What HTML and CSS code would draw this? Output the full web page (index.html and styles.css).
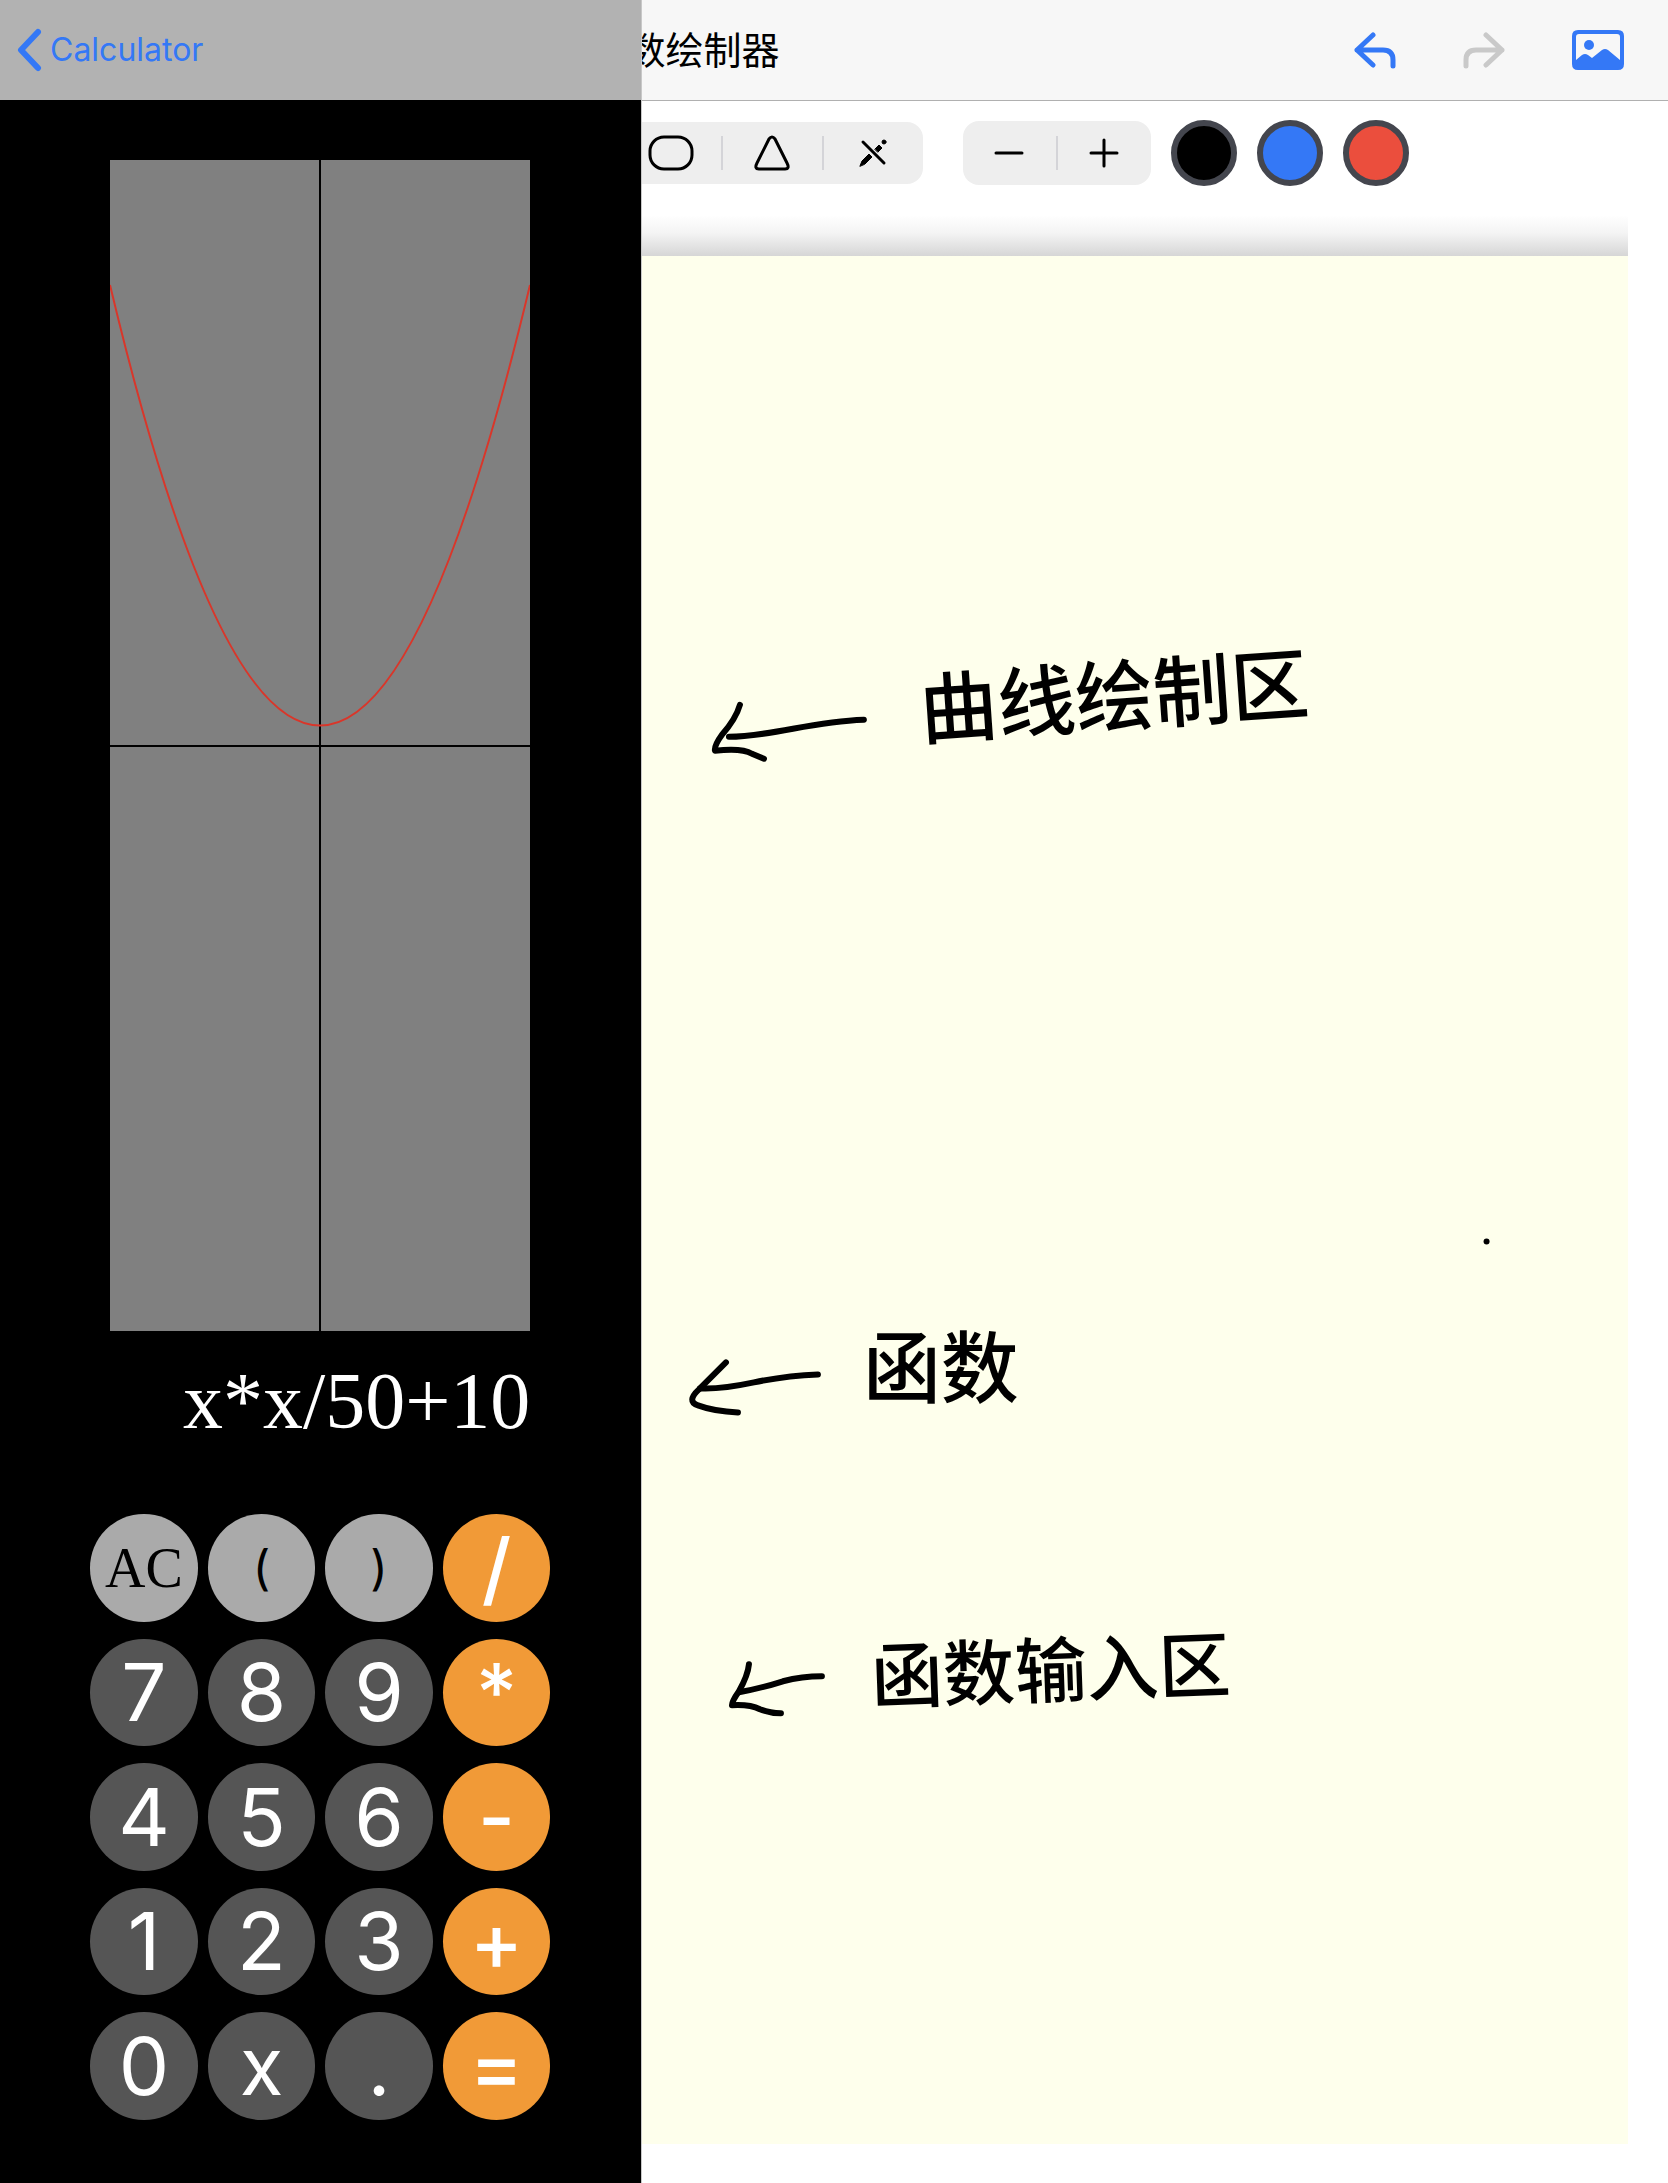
FILE: index.html
```
<!DOCTYPE html>
<html lang="zh-CN">
<head>
<meta charset="utf-8">
<meta name="viewport" content="width=device-width, initial-scale=1">
<title>Calculator</title>
<link rel="stylesheet" href="styles.css">
</head>
<body>
<div class="screen">
  <aside class="calc">
    <header class="calc-nav">
      <a class="back" href="#">
        <svg class="back-icon" viewBox="0 0 26 44" aria-hidden="true"><path d="M22 4 5 22 22 40"/></svg>
        <span>Calculator</span>
      </a>
    </header>
    <div class="calc-body">
      <svg class="graph" viewBox="0 0 420 1171" role="img" aria-label="x*x/50+10">
        <rect class="graph-bg" width="420" height="1171"/>
        <path class="axis" d="M210 0V1171M0 586H420"/>
        <path class="curve" d="M0 125Q210 1006 420 125"/>
      </svg>
      <output class="expression">x*x/50+10</output>
      <div class="keys">
        <button class="key key-fn key-serif" type="button">AC</button>
        <button class="key key-fn" type="button">(</button>
        <button class="key key-fn" type="button">)</button>
        <button class="key key-op" type="button">/</button>
        <button class="key" type="button">7</button>
        <button class="key" type="button">8</button>
        <button class="key" type="button">9</button>
        <button class="key key-op" type="button">*</button>
        <button class="key" type="button">4</button>
        <button class="key" type="button">5</button>
        <button class="key" type="button">6</button>
        <button class="key key-op" type="button">-</button>
        <button class="key" type="button">1</button>
        <button class="key" type="button">2</button>
        <button class="key" type="button">3</button>
        <button class="key key-op" type="button">+</button>
        <button class="key" type="button">0</button>
        <button class="key" type="button">x</button>
        <button class="key" type="button">.</button>
        <button class="key key-op" type="button">=</button>
      </div>
    </div>
  </aside>

  <main class="notes">
    <header class="notes-nav">
      <h1 class="title">数绘制器</h1>
      <div class="actions">
        <button class="action" type="button" aria-label="Undo">
          <svg class="icon-arrow" viewBox="0 0 42 40"><path d="M19 5 3 20 19 35M3 20H29Q39 20 39 30V36"/></svg>
        </button>
        <button class="action" type="button" aria-label="Redo" disabled>
          <svg class="icon-arrow" viewBox="0 0 42 40"><path d="M23 5 39 20 23 35M39 20H13Q3 20 3 30V36"/></svg>
        </button>
        <button class="action" type="button" aria-label="Insert picture">
          <svg class="icon-picture" viewBox="0 0 52 40"><path fill-rule="evenodd" d="M6 0H46Q52 0 52 6V34Q52 40 46 40H6Q0 40 0 34V6Q0 0 6 0ZM7 4Q4 4 4 7V30L10 25Q13 23 16 25L20 28 30 20Q33 18 36 20L48 30V7Q48 4 45 4Z"/><circle cx="17" cy="15" r="5"/></svg>
        </button>
      </div>
    </header>

    <div class="toolbar">
      <div class="group group-shapes">
        <button class="tool" type="button" aria-label="Rounded rectangle">
          <svg class="icon-tool" viewBox="0 0 46 36"><rect x="2" y="2" width="42" height="32" rx="14"/></svg>
        </button>
        <button class="tool" type="button" aria-label="Triangle">
          <svg class="icon-tool" viewBox="0 0 46 36"><path d="M20 4Q23 0 26 4L38 28Q41 34 36 34H10Q5 34 8 28Z"/></svg>
        </button>
        <button class="tool" type="button" aria-label="Pen off">
          <svg class="icon-tool icon-pen" viewBox="0 0 46 36"><path d="M13 7 34 28"/><path class="solid" d="M10 31 12 26 19 19 22 22 15 29ZM25 14 29 10 32 13 28 17Z"/><circle class="solid" cx="34" cy="7" r="2"/></svg>
        </button>
      </div>
      <div class="group group-size">
        <button class="tool" type="button" aria-label="Thinner">
          <svg class="icon-tool" viewBox="0 0 46 36"><path d="M10 18H36"/></svg>
        </button>
        <button class="tool" type="button" aria-label="Thicker">
          <svg class="icon-tool" viewBox="0 0 46 36"><path d="M10 18H36M23 5V31"/></svg>
        </button>
      </div>
      <div class="swatches">
        <button class="swatch swatch-black" type="button" aria-label="Black"></button>
        <button class="swatch swatch-blue" type="button" aria-label="Blue"></button>
        <button class="swatch swatch-red" type="button" aria-label="Red"></button>
      </div>
    </div>

    <div class="sheet">
      <div class="sheet-shadow"></div>
      <div class="paper">
        <svg class="ink" viewBox="0 0 987 1888">
          <g class="arrows">
            <path d="M87 481Q108 481 151 473T222 464"/>
            <path d="M98 449Q94 463 80 479Q72 490 73 495Q100 492 110 498L122 503"/>
            <path d="M58 1133Q79 1134 112 1127T176 1119"/>
            <path d="M84 1107 57 1134Q44 1146 56 1150Q72 1156 96 1157"/>
            <path d="M97 1437Q119 1433 141 1426Q160 1421 180 1421"/>
            <path d="M107 1409Q106 1420 97 1436Q90 1446 90 1450Q108 1449 118 1454Q128 1458 139 1458"/>
          </g>
          <circle cx="845" cy="986" r="3"/>
          <text class="note" x="280" y="483" transform="rotate(-4 280 483)">曲线绘制区</text>
          <text class="note" x="221" y="1142">函数</text>
          <text class="note note-small" x="230" y="1448" transform="rotate(-2 230 1448)">函数输入区</text>
        </svg>
      </div>
    </div>
  </main>
</div>
</body>
</html>
```
FILE: styles.css
```
* {
  box-sizing: border-box;
}

body {
  margin: 0;
  background: #fff;
  font-family: Inter, "Noto Sans CJK SC", sans-serif;
}

button {
  margin: 0;
  padding: 0;
  border: 0;
  background: none;
  color: inherit;
  font: inherit;
}

svg {
  display: block;
}

.screen {
  display: grid;
  grid-template-columns: minmax(500px, 38.4%) 1fr;
  min-height: 100vh;
}

/* Calculator panel */

.calc {
  background: #000;
  color: #fff;
}

.calc-nav {
  display: flex;
  align-items: center;
  height: 100px;
  padding: 0 16px;
  background: #b2b2b2;
}

.back {
  display: flex;
  align-items: center;
  gap: 8px;
  color: #3478f6;
  font-size: 32px;
  line-height: 44px;
  text-decoration: none;
}

.back-icon {
  width: 26px;
  fill: none;
  stroke: currentColor;
  stroke-width: 6;
  stroke-linecap: round;
  stroke-linejoin: round;
}

.calc-body {
  display: flex;
  flex-direction: column;
  align-items: center;
  padding: 60px 20px;
}

.graph {
  width: 100%;
  max-width: 420px;
}

.graph-bg {
  fill: #808080;
}

.axis {
  stroke: #000;
  stroke-width: 2;
}

.curve {
  fill: none;
  stroke: #d9362a;
  stroke-width: 2;
}

.expression {
  width: 100%;
  max-width: 420px;
  margin: 22px 0 64px;
  font-family: "Liberation Serif", serif;
  font-size: 80px;
  line-height: 97px;
  text-align: right;
}

.keys {
  display: grid;
  grid-template-columns: repeat(4, 1fr);
  gap: 17px 10px;
  width: 100%;
  max-width: 460px;
}

.key {
  aspect-ratio: 1;
  border-radius: 50%;
  background: #555;
  font-size: 80px;
  line-height: 1;
}

.key-fn {
  background: #aaa;
  color: #000;
  font-size: 48px;
}

.key-serif {
  font-family: "Liberation Serif", serif;
  font-size: 56px;
}

.key-op {
  background: #f19a37;
  font-weight: 500;
}

/* Drawing app */

.notes {
  display: flex;
  flex-direction: column;
  overflow: hidden;
  border-left: 1px solid #c8c8c8;
}

.notes-nav {
  display: flex;
  align-items: center;
  justify-content: space-between;
  height: 101px;
  padding-right: 44px;
  border-bottom: 1px solid #b0b0b0;
  background: #f7f7f7;
}

.title {
  margin: 0 0 0 -14px;
  font-size: 38px;
  font-weight: 400;
  line-height: 56px;
}

.actions {
  display: flex;
  align-items: center;
  gap: 67px;
  color: #3478f6;
}

.action:disabled {
  color: #c9c9c9;
}

.icon-arrow {
  width: 42px;
  fill: none;
  stroke: currentColor;
  stroke-width: 5;
  stroke-linecap: round;
  stroke-linejoin: round;
}

.icon-picture {
  width: 52px;
  fill: currentColor;
}

.toolbar {
  display: flex;
  align-items: center;
  height: 104px;
}

.group {
  display: flex;
  align-items: center;
  height: 62px;
  border-radius: 16px;
  background: #eee;
}

.group-shapes {
  width: 301px;
  margin: 0 40px 0 -20px;
}

.group-size {
  width: 188px;
  height: 64px;
  margin-right: 20px;
}

.tool {
  display: flex;
  flex: 1;
  align-items: center;
  justify-content: center;
  height: 34px;
}

.tool + .tool {
  border-left: 2px solid #d4d4d8;
}

.icon-tool {
  width: 46px;
  fill: none;
  stroke: #000;
  stroke-width: 3;
  stroke-linecap: round;
  stroke-linejoin: round;
}

.icon-pen .solid {
  fill: #000;
  stroke-width: 1;
}

.swatches {
  display: flex;
  gap: 20px;
}

.swatch {
  width: 66px;
  height: 66px;
  border: 6px solid #44464e;
  border-radius: 50%;
}

.swatch-black {
  background: #000;
}

.swatch-blue {
  background: #3478f6;
}

.swatch-red {
  background: #eb4e3d;
}

.sheet {
  display: flex;
  flex: 1;
  flex-direction: column;
  padding: 0 40px 39px 0;
}

.sheet-shadow {
  height: 51px;
  background: linear-gradient(#fff 10px, #f4f4f4 28px, #d6d6d6);
}

.paper {
  flex: 1;
  background: #feffec;
}

.ink {
  width: 100%;
}

.arrows {
  fill: none;
  stroke: #000;
  stroke-width: 6;
  stroke-linecap: round;
  stroke-linejoin: round;
}

.note {
  font-family: "Noto Sans CJK SC", sans-serif;
  font-size: 78px;
  font-weight: 500;
}

.note-small {
  font-size: 72px;
}
```
